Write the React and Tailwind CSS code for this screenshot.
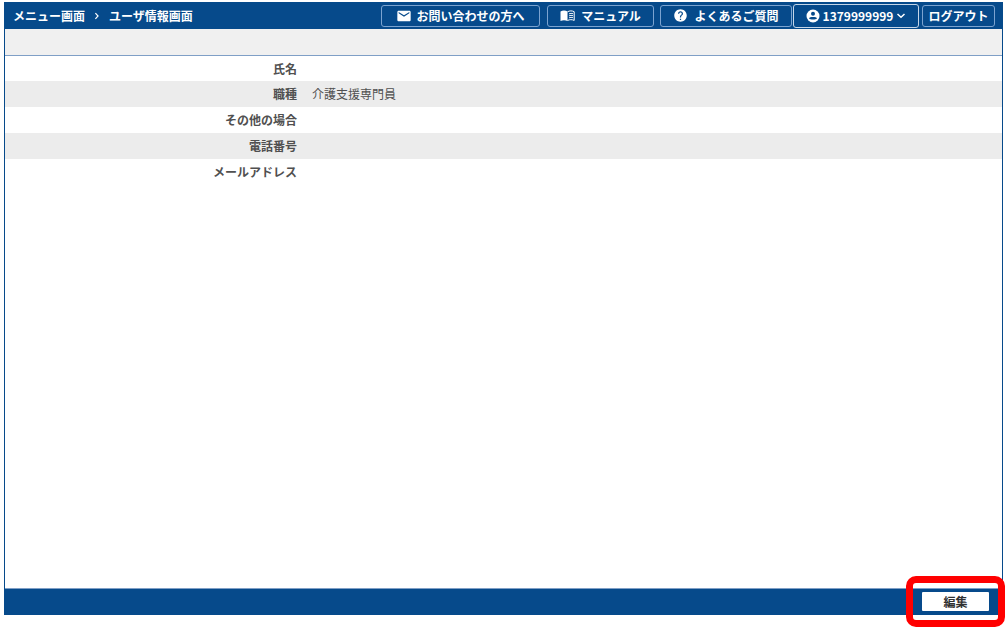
import { MdEmail, MdHelp } from 'react-icons/md'

const rows = [
  { label: '氏名', value: '' },
  { label: '職種', value: '介護支援専門員' },
  { label: 'その他の場合', value: '' },
  { label: '電話番号', value: '' },
  { label: 'メールアドレス', value: '' },
]

const headerButton = 'flex h-[22px] items-center justify-center whitespace-nowrap rounded-[3px] border border-[#7ba3d0]'

function Chevron({ className }) {
  return (
    <svg className={className} viewBox="0 0 10 10" fill="none" stroke="currentColor" strokeWidth="1.5">
      <path d="M1.5 3 5 6.3 8.5 3" />
    </svg>
  )
}

// Open book, left page filled, right page with lines
function BookIcon() {
  return (
    <svg className="h-4 w-[15px]" viewBox="0 0 15 16" fill="none" stroke="currentColor">
      <path fill="currentColor" stroke="none" d="M0.5 3.5C2.5 2.3 5.5 2.3 7.5 3.5V13C5.5 11.9 2.5 11.9 0.5 13Z" />
      <path d="M7.5 3.8C9.5 2.6 12.2 2.6 14.2 3.7V12.4C12.2 11.4 9.5 11.4 7.5 12.5" />
      <path strokeWidth="0.9" d="M9 5.8C10.4 5.3 11.6 5.3 13 5.6M9 7.8C10.4 7.3 11.6 7.3 13 7.6M9 9.8C10.4 9.3 11.6 9.3 13 9.6" />
    </svg>
  )
}

function UserIcon() {
  return (
    <svg className="size-[14px]" viewBox="0 0 14 14">
      <circle cx="7" cy="7" r="6.5" fill="currentColor" />
      <circle cx="7" cy="4.7" r="2" fill="#064a8b" />
      <path fill="#064a8b" d="M3 9.3C3.4 7.7 10.6 7.7 11 9.3C10.2 10.5 8.8 10.5 7 10.5S3.8 10.5 3 9.3Z" />
    </svg>
  )
}

function Header() {
  return (
    <header className="flex h-[27px] items-center justify-between bg-[#064a8b] pl-2 pr-[7px] font-bold text-white">
      <nav className="flex items-center gap-2 whitespace-nowrap">
        <a href="#menu">メニュー画面</a>
        <Chevron className="size-2 -rotate-90" />
        <span>ユーザ情報画面</span>
      </nav>
      <div className="flex items-center">
        <button className={`${headerButton} mr-[7px] w-[159px] gap-1`}>
          <MdEmail className="size-4" />
          お問い合わせの方へ
        </button>
        <button className={`${headerButton} mr-1.5 w-[107px] gap-1.5`}>
          <BookIcon />
          マニュアル
        </button>
        <button className={`${headerButton} mr-px w-[132px] gap-1.5`}>
          <MdHelp className="size-[15px]" />
          よくあるご質問
        </button>
        <button className="mr-[3px] flex h-6 w-[126px] items-center justify-center gap-[3px] rounded-[3px] border border-[#c5d6e8]">
          <UserIcon />
          1379999999
          <Chevron className="size-2.5" />
        </button>
        <button className={`${headerButton} w-[73px]`}>ログアウト</button>
      </div>
    </header>
  )
}

export default function App() {
  return (
    <div className="flex min-h-screen flex-col bg-white pt-0.5 pr-[5px] pb-[18px] pl-1 font-['Noto_Sans_CJK_JP',sans-serif] text-[12px] leading-[18px] text-[#505050]">
      <div className="flex flex-1 flex-col border-x border-[#064a8b]">
        <Header />
        <div className="h-[27px] border-b border-[#7f9fc6] bg-[#f0f0f0]" />

        <main className="flex-1">
          <table className="w-full table-fixed">
            <tbody>
              {rows.map((row) => (
                <tr key={row.label} className="h-[26px] first:h-[25px] even:bg-[#ececec]">
                  <th scope="row" className="w-[292px] text-right font-bold">{row.label}</th>
                  <td className="pl-[15px]">{row.value}</td>
                </tr>
              ))}
            </tbody>
          </table>
        </main>

        <footer className="flex h-[27px] items-start justify-end border-t border-[#7f9fc6] bg-[#064a8b] pt-[3px] pr-[13px]">
          <div className="relative">
            <button className="block h-[19px] w-[67px] rounded-[1px] bg-white font-bold text-[#303030]">編集</button>
            {/* Highlight around the edit button */}
            <div className="pointer-events-none absolute -inset-4 rounded-[10px] border-[7px] border-[#ff0000]" />
          </div>
        </footer>
      </div>
    </div>
  )
}
